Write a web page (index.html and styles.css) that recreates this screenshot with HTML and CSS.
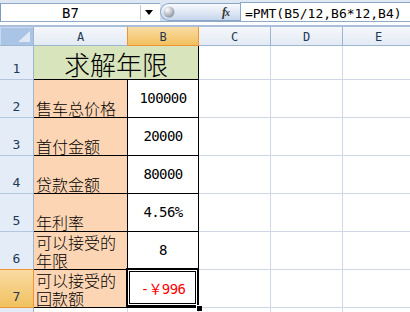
FILE: index.html
```html
<!DOCTYPE html>
<html>
<head>
<meta charset="utf-8">
<link rel="stylesheet" href="styles.css">
</head>
<body>
<div class="app">
  <div class="fbar">
    <div class="namebox">
      <span class="nb-text">B7</span>
      <span class="nb-sep"></span>
      <span class="nb-drop"><svg width="8" height="5" viewBox="0 0 8 5"><polygon points="0,0 8,0 4,5" fill="#000"/></svg></span>
    </div>
    <div class="pill">
      <svg class="knob" width="12" height="12" viewBox="0 0 12 12"><defs><radialGradient id="kg" cx="0.35" cy="0.3" r="0.75"><stop offset="0" stop-color="#ffffff"/><stop offset="0.6" stop-color="#b9bec6"/><stop offset="1" stop-color="#8c939e"/></radialGradient></defs><circle cx="6" cy="6" r="5.5" fill="url(#kg)"/></svg>
      <span class="fx"><i>f</i><span class="fx-x">x</span></span>
    </div>
    <div class="formula">=PMT(B5/12,B6*12,B4)</div>
  </div>
  <div class="spacer"></div>
  <div class="sheet">
    <div class="corner"><svg width="12" height="11" viewBox="0 0 12 11"><polygon points="12,0 12,11 0,11" fill="#dfe8f4"/></svg></div>
    <div class="h h-a">A</div>
    <div class="h h-sel">B</div>
    <div class="h">C</div>
    <div class="h">D</div>
    <div class="h">E</div>

    <div class="rh">1</div>
    <div class="c bx title">求解年限</div>
    <div class="c"></div>
    <div class="c"></div>
    <div class="c"></div>

    <div class="rh">2</div>
    <div class="c bx lbl">售车总价格</div>
    <div class="c bx num">100000</div>
    <div class="c"></div>
    <div class="c"></div>
    <div class="c"></div>

    <div class="rh">3</div>
    <div class="c bx lbl">首付金额</div>
    <div class="c bx num">20000</div>
    <div class="c"></div>
    <div class="c"></div>
    <div class="c"></div>

    <div class="rh">4</div>
    <div class="c bx lbl">贷款金额</div>
    <div class="c bx num">80000</div>
    <div class="c"></div>
    <div class="c"></div>
    <div class="c"></div>

    <div class="rh">5</div>
    <div class="c bx lbl">年利率</div>
    <div class="c bx num">4.56%</div>
    <div class="c"></div>
    <div class="c"></div>
    <div class="c"></div>

    <div class="rh rh-pre">6</div>
    <div class="c bx lbl">可以接受的<br>年限</div>
    <div class="c bx num">8</div>
    <div class="c"></div>
    <div class="c"></div>
    <div class="c"></div>

    <div class="rh rh-sel">7</div>
    <div class="c bx lbl">可以接受的<br>回款额</div>
    <div class="c bx num neg sel">-￥996</div>
    <div class="c"></div>
    <div class="c"></div>
    <div class="c"></div>

    <div class="rh"></div>
    <div class="c"></div>
    <div class="c"></div>
    <div class="c"></div>
    <div class="c"></div>
    <div class="c"></div>
  </div>
</div>
</body>
</html>
```

FILE: styles.css
```css
html, body {
  margin: 0;
  padding: 0;
  width: 410px;
  height: 312px;
  overflow: hidden;
  background: #fff;
}
.app {
  width: 410px;
  font-family: "DejaVu Sans Mono", monospace;
}
.fbar {
  display: flex;
  height: 22px;
  box-sizing: border-box;
  background: linear-gradient(#dfe8f3, #cddbee);
  border-bottom: 1px solid #8fa9c9;
}
.namebox {
  display: flex;
  align-items: center;
  width: 160px;
  margin-top: 3px;
  box-sizing: border-box;
  background: #fff;
  border-top: 1px solid #8fa9c9;
  border-left: 1px solid #7f9cc0;
}
.nb-text {
  width: 139px;
  text-align: center;
  font-size: 14px;
  color: #000;
  padding-top: 1px;
}
.nb-sep {
  width: 1px;
  height: 15px;
  background: #c9c9c9;
}
.nb-drop {
  flex: 1;
  display: flex;
  justify-content: center;
  align-items: center;
  padding-right: 4px;
}
.pill {
  width: 80px;
  margin-top: 3px;
  height: 18px;
  box-sizing: border-box;
  display: flex;
  align-items: center;
  justify-content: space-between;
  padding: 0 11px 0 2px;
  border: 1px solid #8ba6c8;
  border-right: none;
  border-radius: 9px 0 0 9px;
  background: linear-gradient(#f8fafd, #e1e9f5 50%, #c6d6ec);
}
.knob {
  display: block;
}
.fx {
  font-family: "Liberation Serif", serif;
  font-size: 12px;
  font-weight: bold;
  color: #333;
  letter-spacing: -1px;
}
.fx-x {
  font-size: 10px;
  font-style: italic;
}
.formula {
  flex: 1;
  margin-top: 2px;
  box-sizing: border-box;
  background: #fff;
  border-top: 1px solid #8ba6c8;
  border-left: 1px solid #8ba6c8;
  padding: 3px 0 0 4px;
  font-size: 13px;
  line-height: 16px;
  color: #000;
  white-space: nowrap;
}
.spacer {
  height: 3px;
  background: #fff;
  border-bottom: 2px solid #a9bfd9;
}
.sheet {
  display: grid;
  grid-template-columns: 34px 94px 71px 72px 72px 72px;
  grid-template-rows: 19px 34px repeat(6, 38px) 10px;
}
.corner {
  box-sizing: border-box;
  background: #aac4e6;
  border-right: 1px solid #9eb6ce;
  border-bottom: 1px solid #9eb6ce;
  box-shadow: inset 1px 1px 0 #c9daf0;
  display: flex;
  align-items: flex-end;
  justify-content: flex-end;
  padding: 0 3px 3px 0;
}
.corner svg {
  display: block;
}
.h {
  box-sizing: border-box;
  background: linear-gradient(#f5f8fc, #e3eaf4);
  border-right: 1px solid #9eb6ce;
  border-bottom: 1px solid #9eb6ce;
  display: flex;
  align-items: center;
  justify-content: center;
  font-size: 12px;
  color: #1e3a56;
  padding-top: 1px;
}
.h-a {
  border-right-color: #f29436;
}
.h-sel {
  background: linear-gradient(#f9dba3, #f1c15f);
  border-right-color: #f29436;
  border-bottom-color: #f29436;
}
.rh {
  box-sizing: border-box;
  background: #e4ecf7;
  border-right: 1px solid #9eb6ce;
  border-bottom: 1px solid #b3c7df;
  display: flex;
  align-items: flex-end;
  justify-content: center;
  padding-bottom: 4px;
  font-size: 13px;
  line-height: 13px;
  color: #1e3a56;
}
.rh-pre {
  border-bottom-color: #f29436;
}
.rh-sel {
  background: linear-gradient(#f9dba3, #f1c15f);
  border-bottom-color: #f29436;
  border-right-color: #f29436;
}
.c {
  box-sizing: border-box;
  border-right: 1px solid #d0d7e5;
  border-bottom: 1px solid #d0d7e5;
}
.bx {
  border-right-color: #000;
  border-bottom-color: #000;
}
.title {
  grid-column: span 2;
  background: #d8e4bc;
  display: flex;
  align-items: flex-end;
  justify-content: center;
  font-family: "Noto Sans CJK SC", sans-serif;
  font-weight: 300;
  font-size: 26px;
  line-height: 26px;
  padding-bottom: 2px;
  color: #000;
}
.lbl {
  background: #fcd5b4;
  display: flex;
  align-items: flex-end;
  padding: 0 0 0 2px;
  font-family: "Noto Sans CJK SC", sans-serif;
  font-weight: 300;
  font-size: 16px;
  line-height: 18px;
  color: #000;
}
.num {
  display: flex;
  align-items: center;
  justify-content: center;
  padding-bottom: 1px;
  font-size: 14px;
  letter-spacing: -0.6px;
  color: #000;
}
.neg {
  color: #ff0000;
  font-family: "DejaVu Sans Mono", "Noto Sans CJK SC", monospace;
}
.sel {
  position: relative;
}
.sel::after {
  content: "";
  position: absolute;
  left: -2px;
  top: -2px;
  right: -1px;
  bottom: 0;
  border: 2px solid #000;
  box-shadow: inset 0 0 0 1px #fff, inset 0 0 0 2px #000;
}
.sel::before {
  content: "";
  position: absolute;
  right: -4px;
  bottom: -4px;
  width: 5px;
  height: 5px;
  background: #000;
  border-top: 1px solid #fff;
  border-left: 1px solid #fff;
  z-index: 2;
}
```
